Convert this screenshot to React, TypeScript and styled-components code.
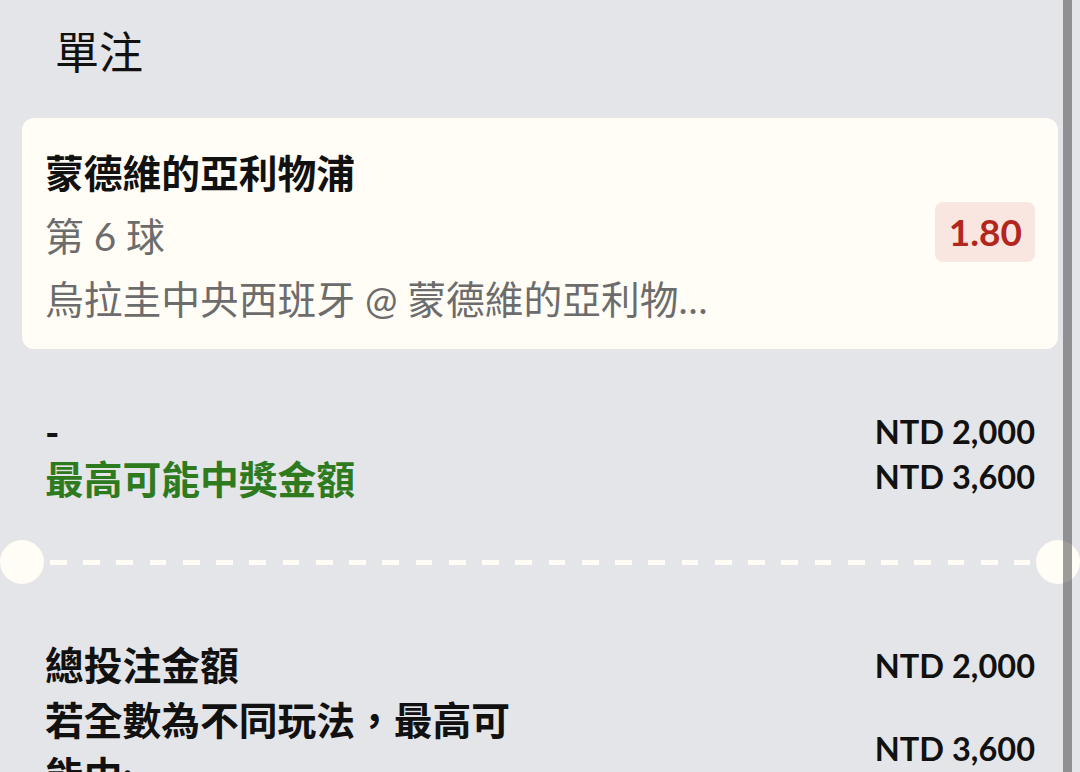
import React from "react";
import styled, { createGlobalStyle } from "styled-components";

const GlobalStyle = createGlobalStyle`
  html, body {
    margin: 0;
    padding: 0;
    overflow: hidden;
    background: #e4e5e8;
  }
  body {
    font-family: Lato, "Noto Sans CJK TC", sans-serif;
    color: #111;
  }
`;

const Page = styled.div`
  position: relative;
  width: 1080px;
  height: 772px;
  overflow: hidden;
  background: #e4e5e8;
`;

const Header = styled.h1`
  margin: 0;
  height: 118px;
  box-sizing: border-box;
  padding: 30px 0 0 55px;
  font-size: 44px;
  line-height: 44px;
  font-weight: 400;
  color: #111;
`;

const Card = styled.section`
  margin: 0 22px;
  background: #fffdf5;
  border-radius: 12px;
  padding: 24px 23px 18px 23px;
  display: flex;
  align-items: center;
  justify-content: space-between;
`;

const Info = styled.div`
  display: flex;
  flex-direction: column;
  min-width: 0;
  flex: 1;
`;

const Line = styled.div<{ $bold?: boolean; $muted?: boolean; $clip?: boolean }>`
  font-size: 38.75px;
  line-height: 63px;
  font-weight: ${(p) => (p.$bold ? 700 : 400)};
  color: ${(p) => (p.$muted ? "#6c6c6c" : "#111")};
  ${(p) =>
    p.$clip &&
    `
    max-width: 669px;
    white-space: nowrap;
    overflow: hidden;
    text-overflow: ellipsis;
  `}
`;

const Odds = styled.div`
  height: 60px;
  line-height: 60px;
  padding: 0 13px 0 14px;
  margin-bottom: 9px;
  border-radius: 8px;
  background: #f9e6e0;
  color: #b3261e;
  font-size: 37px;
  font-weight: 700;
`;

const Summary = styled.div<{ $top: number }>`
  margin-top: ${(p) => p.$top}px;
  padding: 0 45px 0 45px;
  display: flex;
  justify-content: space-between;
  align-items: flex-start;
`;

const LabelCol = styled.div`
  display: flex;
  flex-direction: column;
  font-size: 38.75px;
  line-height: 47px;
  font-weight: 700;
`;

const Label = styled.div<{ $green?: boolean }>`
  color: ${(p) => (p.$green ? "#2e7b1f" : "#111")};
`;

const ValueCol = styled.div`
  display: flex;
  flex-direction: column;
  align-items: flex-end;
  font-size: 32.5px;
  line-height: 45px;
  font-weight: 700;
  color: #111;
`;

const Separator = styled.div`
  margin-top: 37px;
  height: 44px;
  display: flex;
  align-items: center;
`;

const Notch = styled.div`
  width: 44px;
  height: 44px;
  border-radius: 50%;
  background: #fffdf5;
  flex: none;
`;

const Dashes = styled.div`
  flex: 1;
  height: 5px;
  margin: 0 6px;
  background: repeating-linear-gradient(
    to right,
    #fffdf5 0 16.6px,
    transparent 16.6px 33.25px
  );
`;

const Totals = styled.div`
  margin-top: 54px;
  padding: 0 45px 0 45px;
  display: flex;
  flex-direction: column;
`;

const TotalRow = styled.div`
  display: flex;
  justify-content: space-between;
  align-items: center;
  line-height: 55px;
`;

const TotalLabel = styled.div`
  max-width: 482px;
  font-size: 38.75px;
  font-weight: 700;
  color: #111;
`;

const TotalValue = styled.div`
  font-size: 32.5px;
  font-weight: 700;
  color: #111;
  white-space: nowrap;
`;

const ScrollThumb = styled.div`
  position: absolute;
  top: 0;
  bottom: 0;
  right: 8px;
  width: 9px;
  background: rgba(60, 60, 60, 0.5);
`;

export default function App() {
  return (
    <>
      <GlobalStyle />
      <Page>
        <Header>單注</Header>
        <Card>
          <Info>
            <Line $bold>蒙德維的亞利物浦</Line>
            <Line $muted>第 6 球</Line>
            <Line $muted $clip>
              烏拉圭中央西班牙 @ 蒙德維的亞利物浦
            </Line>
          </Info>
          <Odds>1.80</Odds>
        </Card>
        <Summary $top={60}>
          <LabelCol>
            <Label>-</Label>
            <Label $green>最高可能中獎金額</Label>
          </LabelCol>
          <ValueCol>
            <div>NTD 2,000</div>
            <div>NTD 3,600</div>
          </ValueCol>
        </Summary>
        <Separator>
          <Notch />
          <Dashes />
          <Notch />
        </Separator>
        <Totals>
          <TotalRow>
            <TotalLabel>總投注金額</TotalLabel>
            <TotalValue>NTD 2,000</TotalValue>
          </TotalRow>
          <TotalRow>
            <TotalLabel>若全數為不同玩法，最高可能中:</TotalLabel>
            <TotalValue>NTD 3,600</TotalValue>
          </TotalRow>
        </Totals>
        <ScrollThumb />
      </Page>
    </>
  );
}
